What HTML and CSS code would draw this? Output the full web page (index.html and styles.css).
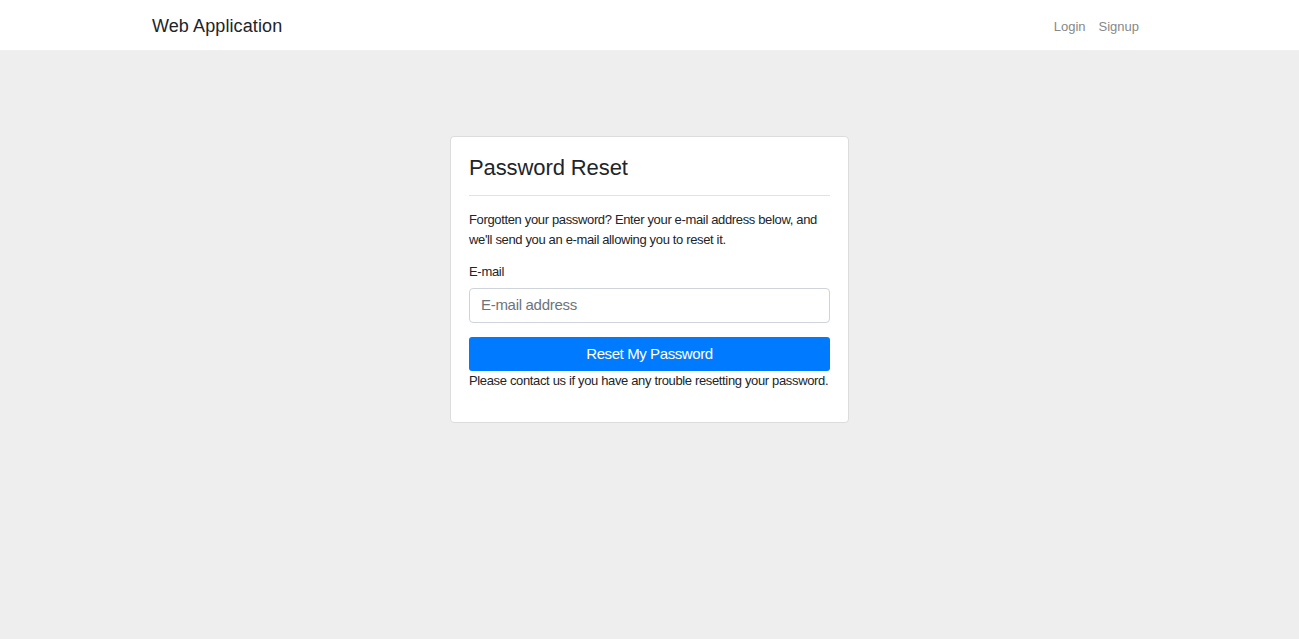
FILE: index.html
```html
<!DOCTYPE html>
<html lang="en">
<head>
<meta charset="utf-8">
<title>Password Reset</title>
<link rel="stylesheet" href="styles.css">
</head>
<body>
<nav class="navbar">
  <div class="nav-inner">
    <a class="brand" href="#">Web Application</a>
    <ul class="nav-links">
      <li><a href="#">Login</a></li>
      <li><a href="#">Signup</a></li>
    </ul>
  </div>
</nav>
<main class="main">
  <div class="card">
    <h4 class="card-title">Password Reset</h4>
    <hr class="divider">
    <p class="intro">Forgotten your password? Enter your e-mail address below, and we'll send you an e-mail allowing you to reset it.</p>
    <form class="form">
      <label class="label" for="email">E-mail</label>
      <input class="input" id="email" type="email" placeholder="E-mail address">
      <button class="btn" type="button">Reset My Password</button>
    </form>
    <p class="help">Please contact us if you have any trouble resetting your password.</p>
  </div>
</main>
</body>
</html>
```
FILE: styles.css
```css
* { box-sizing: border-box; }
html, body { height: 100%; }
body {
  margin: 0;
  background: #eeeeee;
  font-family: "Liberation Sans", Arial, sans-serif;
  color: #212529;
}
.navbar {
  background: #fff;
  height: 50px;
}
.nav-inner {
  height: 100%;
  display: flex;
  align-items: center;
  justify-content: space-between;
  padding: 1px 160px 0 152px;
}
.brand {
  font-size: 18px;
  letter-spacing: 0.1px;
  color: #212529;
  text-decoration: none;
  padding-top: 2px;
}
.nav-links {
  list-style: none;
  margin: 0;
  padding: 0;
  display: flex;
  gap: 13px;
}
.nav-links a {
  font-size: 13px;
  color: #888;
  text-decoration: none;
}
.main {
  padding-top: 86px;
  display: flex;
  justify-content: center;
}
.card {
  width: 399px;
  background: #fff;
  border: 1px solid #dcdcdc;
  border-radius: 4px;
  padding: 17px 18px 31px;
}
.card-title {
  margin: 0;
  font-size: 22px;
  font-weight: 400;
  line-height: 28px;
  letter-spacing: -0.1px;
}
.divider {
  border: 0;
  border-top: 1px solid #e2e2e2;
  margin: 13px 0 14px;
}
.intro {
  margin: 0 0 12px;
  font-size: 13px;
  line-height: 20px;
  letter-spacing: -0.35px;
}
.form { display: flex; flex-direction: column; }
.label {
  font-size: 13px;
  line-height: 20px;
  margin-bottom: 6px;
  letter-spacing: -0.3px;
}
.input {
  height: 35px;
  border: 1px solid #ced4da;
  border-radius: 4px;
  padding: 0 11px 2px;
  font-family: inherit;
  font-size: 15px;
  letter-spacing: -0.3px;
  color: #495057;
}
.input::placeholder { color: #6c757d; }
.btn {
  margin-top: 14px;
  height: 34px;
  border: 0;
  border-radius: 3px;
  background: #007bff;
  color: #fff;
  font-family: inherit;
  font-size: 15px;
  letter-spacing: -0.4px;
  padding: 0 0 2px;
}
.help {
  margin: 0;
  font-size: 13px;
  line-height: 20px;
  letter-spacing: -0.35px;
}
```
